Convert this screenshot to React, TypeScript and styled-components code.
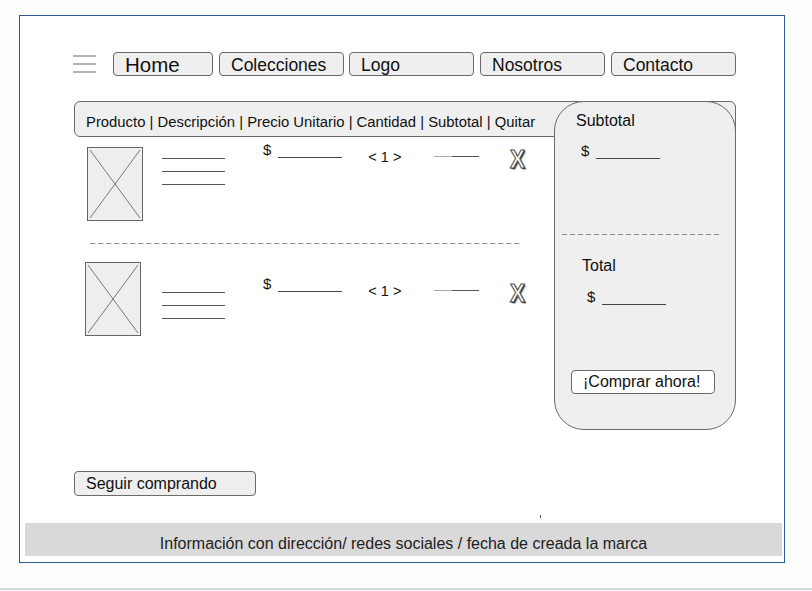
import styled, { createGlobalStyle } from 'styled-components';

const GlobalStyle = createGlobalStyle`
	html, body {
		margin: 0;
		padding: 0;
		background: #fdfdfd;
	}
	body {
		font-family: "Liberation Sans", Arial, sans-serif;
		color: #111;
	}
`;

// page + frame

const Page = styled.div`
	box-sizing: border-box;
	height: 590px;
	padding: 15px 0 0 19px;
	border-bottom: 2px solid #d6d6d6;
`;

const Frame = styled.div`
	box-sizing: border-box;
	width: 766px;
	height: 548px;
	border: 1px solid #2f5a98;
	background: #fff;
	display: flex;
	flex-direction: column;
	padding: 0 2px 6px 5px;
`;

const Main = styled.main`
	flex: 1;
	padding: 36px 0 0 48px;
	display: flex;
	flex-direction: column;
`;

// nav

const NavBar = styled.nav`
	display: flex;
	align-items: center;
	height: 24px;
`;

const Burger = styled.div`
	width: 23px;
	height: 18px;
	margin-right: 17px;
	display: flex;
	flex-direction: column;
	justify-content: space-between;

	span {
		display: block;
		height: 2px;
		background: #b4b4b4;
	}
`;

const NavButton = styled.button<{ $w: number; $gap: number; $big?: boolean }>`
	box-sizing: border-box;
	width: ${(p) => p.$w}px;
	height: 24px;
	margin-right: ${(p) => p.$gap}px;
	padding: 1px 0 0 11px;
	text-align: left;
	border: 1px solid #6a6a6a;
	border-radius: 4px;
	background: #efefef;
	font-family: inherit;
	font-size: ${(p) => (p.$big ? '20.5px' : '17.5px')};
	line-height: 22px;
	color: #111;
`;

// cart area

const CartGrid = styled.section`
	display: grid;
	grid-template-columns: 480px 182px;
	grid-template-rows: 36px auto;
	margin-top: 25px;
	margin-left: 1px;
`;

const HeaderBar = styled.div`
	grid-column: 1 / 3;
	grid-row: 1;
	box-sizing: border-box;
	border: 1px solid #6a6a6a;
	border-radius: 6px;
	background: #efefef;
	padding: 0 0 0 11px;
	font-size: 14.85px;
	line-height: 40px;
	white-space: nowrap;
`;

const ItemList = styled.div`
	grid-column: 1;
	grid-row: 2;
	display: flex;
	flex-direction: column;
`;

const ItemRow = styled.div`
	display: grid;
	grid-template-columns: 88px 1fr;
	align-items: start;
`;

const Thumb = styled.svg<{ $top: number; $left: number }>`
	display: block;
	margin-top: ${(p) => p.$top}px;
	margin-left: ${(p) => p.$left}px;
`;

const Info = styled.div<{ $top: number }>`
	display: flex;
	align-items: flex-start;
	margin-top: ${(p) => p.$top}px;
	font-size: 15px;
`;

const DescLines = styled.div`
	width: 63px;
	margin-top: 17px;
	display: flex;
	flex-direction: column;
	gap: 12px;

	span {
		display: block;
		height: 1px;
		background: #555;
	}
`;

const Price = styled.div<{ $left: number }>`
	display: flex;
	align-items: flex-start;
	margin-left: ${(p) => p.$left}px;
	line-height: 17px;
`;

const Blank = styled.span`
	box-sizing: border-box;
	display: block;
	width: 64px;
	height: 17px;
	margin-left: 7px;
	border-bottom: 1px solid #444;
`;

const Qty = styled.div`
	width: 36px;
	margin-left: 26px;
	margin-top: 8px;
	line-height: 17px;
	font-size: 14.5px;
	white-space: nowrap;
`;

const SubLine = styled.span`
	display: block;
	width: 45px;
	height: 1px;
	margin-left: 30px;
	margin-top: 15px;
	background: linear-gradient(to right, #aaa 0 40%, #555 40% 100%);
`;

const RemoveX = styled.span`
	display: block;
	margin-left: 31px;
	margin-top: 6px;
	font-weight: bold;
	font-size: 25px;
	line-height: 24px;
	color: #fff;
	-webkit-text-stroke: 1.2px #555;
	text-shadow: 1px 1px 0 #222, 2px 2px 1px #bbb;
	transform: scaleX(0.9);
	transform-origin: left center;
`;

const Divider = styled.div<{ $w: number; $left: number; $top?: number }>`
	width: ${(p) => p.$w}px;
	height: 1px;
	margin-left: ${(p) => p.$left}px;
	margin-top: ${(p) => p.$top ?? 0}px;
	background: repeating-linear-gradient(to right, #8a8a8a 0 5px, transparent 5px 8px);
`;

// summary panel

const Panel = styled.aside`
	grid-column: 2;
	grid-row: 1 / 3;
	z-index: 1;
	box-sizing: border-box;
	height: 329px;
	border: 1px solid #6a6a6a;
	border-radius: 30px;
	background: #efefef;
	display: flex;
	flex-direction: column;
	padding: 10px 0 0 0;
`;

const PanelLabel = styled.div<{ $left: number; $top: number; $size: number }>`
	margin-left: ${(p) => p.$left}px;
	margin-top: ${(p) => p.$top}px;
	font-size: ${(p) => p.$size}px;
	line-height: 17px;
`;

const PanelPrice = styled(Price)<{ $top: number }>`
	margin-top: ${(p) => p.$top}px;
	font-size: 15px;
`;

const BuyButton = styled.button`
	box-sizing: border-box;
	width: 144px;
	height: 24px;
	margin: 65px 0 0 16px;
	padding: 0 0 0 11px;
	text-align: left;
	border: 1px solid #6a6a6a;
	border-radius: 4px;
	background: #fff;
	font-family: inherit;
	font-size: 16px;
	color: #111;
`;

// bottom

const KeepShopping = styled.button`
	box-sizing: border-box;
	width: 182px;
	height: 25px;
	margin: 41px 0 0 1px;
	padding: 0 0 0 11px;
	text-align: left;
	border: 1px solid #6a6a6a;
	border-radius: 4px;
	background: #efefef;
	font-family: inherit;
	font-size: 16px;
	color: #111;
`;

const Tick = styled.span`
	display: block;
	width: 1px;
	height: 3px;
	margin: 19px 0 0 467px;
	background: #555;
`;

const Footer = styled.footer`
	height: 33px;
	background: #d9d9d9;
	text-align: center;
	font-size: 16px;
	line-height: 42px;
	color: #222;
`;

const navItems = [
	{ label: 'Home', w: 100, gap: 6, big: true },
	{ label: 'Colecciones', w: 125, gap: 5 },
	{ label: 'Logo', w: 125, gap: 6 },
	{ label: 'Nosotros', w: 125, gap: 6 },
	{ label: 'Contacto', w: 125, gap: 0 },
];

function Placeholder(props: { top: number; left: number }) {
	return (
		<Thumb $top={props.top} $left={props.left} width="56" height="74" viewBox="0 0 56 74">
			<rect x="0.5" y="0.5" width="55" height="73" fill="#eeeeee" stroke="#666" />
			<line x1="3" y1="3" x2="53" y2="71" stroke="#777" />
			<line x1="53" y1="3" x2="3" y2="71" stroke="#777" />
		</Thumb>
	);
}

function Item(props: { thumbTop: number; thumbLeft: number; infoTop: number }) {
	return (
		<ItemRow>
			<Placeholder top={props.thumbTop} left={props.thumbLeft} />
			<Info $top={props.infoTop}>
				<DescLines>
					<span />
					<span />
					<span />
				</DescLines>
				<Price $left={38}>
					<span>$</span>
					<Blank />
				</Price>
				<Qty>&lt; 1 &gt;</Qty>
				<SubLine />
				<RemoveX>X</RemoveX>
			</Info>
		</ItemRow>
	);
}

export default function App() {
	return (
		<>
			<GlobalStyle />
			<Page>
				<Frame>
					<Main>
						<NavBar>
							<Burger>
								<span />
								<span />
								<span />
							</Burger>
							{navItems.map((item) => (
								<NavButton key={item.label} $w={item.w} $gap={item.gap} $big={item.big}>
									{item.label}
								</NavButton>
							))}
						</NavBar>

						<CartGrid>
							<HeaderBar>Producto | Descripción | Precio Unitario | Cantidad | Subtotal | Quitar</HeaderBar>
							<ItemList>
								<Item thumbTop={10} thumbLeft={13} infoTop={4} />
								<Divider $w={432} $left={16} $top={22} />
								<Item thumbTop={18} thumbLeft={11} infoTop={31} />
							</ItemList>
							<Panel>
								<PanelLabel $left={21} $top={0} $size={16}>
									Subtotal
								</PanelLabel>
								<PanelPrice $left={26} $top={13}>
									<span>$</span>
									<Blank />
								</PanelPrice>
								<Divider $w={160} $left={7} $top={75} />
								<PanelLabel $left={27} $top={22} $size={16}>
									Total
								</PanelLabel>
								<PanelPrice $left={32} $top={14}>
									<span>$</span>
									<Blank />
								</PanelPrice>
								<BuyButton>¡Comprar ahora!</BuyButton>
							</Panel>
						</CartGrid>

						<KeepShopping>Seguir comprando</KeepShopping>
						<Tick />
					</Main>
					<Footer>Información con dirección/ redes sociales / fecha de creada la marca</Footer>
				</Frame>
			</Page>
		</>
	);
}
